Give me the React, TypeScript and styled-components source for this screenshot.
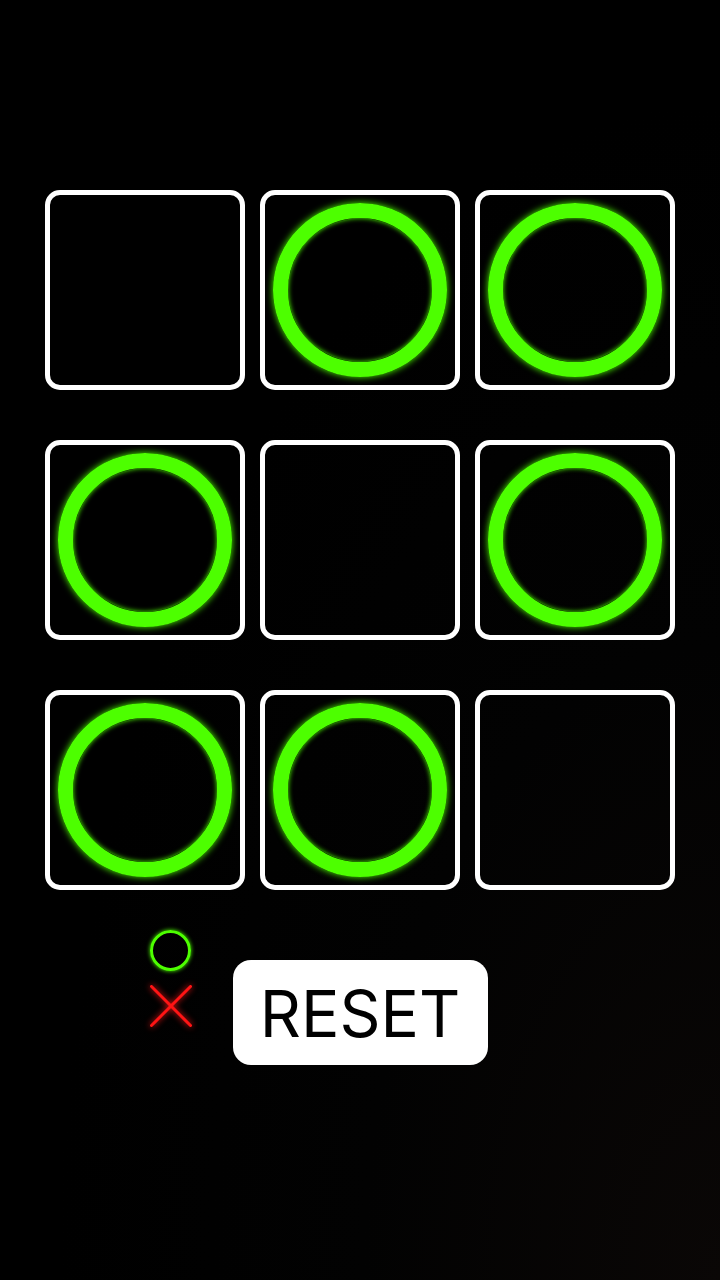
import React from 'react';
import styled, {createGlobalStyle} from 'styled-components';

const Green = "#4dff00";
const Red = "#ff1414";

const GlobalStyle = createGlobalStyle`
    html, body {
        margin: 0;
        padding: 0;
        background: #000;
    }
    * {
        box-sizing: border-box;
    }
`;

const Screen = styled.div`
    width: 720px;
    height: 1280px;
    overflow: hidden;
    background: radial-gradient(ellipse at 100% 100%, #0a0706 0%, #020202 35%, #000 65%);
    font-family: Inter, "Noto Sans", sans-serif;
    display: flex;
    flex-direction: column;
    align-items: center;
    padding-top: 190px;
`;

const Board = styled.div`
    display: grid;
    grid-template-columns: repeat(3, 200px);
    column-gap: 15px;
    row-gap: 50px;
`;

const Cell = styled.div`
    width: 200px;
    height: 200px;
    border: 5px solid #fff;
    border-radius: 15px;
    display: flex;
    align-items: center;
    justify-content: center;
`;

const Ring = styled.div`
    width: 174px;
    height: 174px;
    border-radius: 50%;
    border: 15px solid ${Green};
    box-shadow: 0 0 7px ${Green}, inset 0 0 5px ${Green};
`;

const Controls = styled.div`
    display: grid;
    grid-template-columns: 1fr auto 1fr;
    column-gap: 41px;
    width: 720px;
    margin-top: 40px;
`;

const Legend = styled.div`
    justify-self: end;
    display: flex;
    flex-direction: column;
    align-items: center;
    gap: 14px;
`;

const LegendRing = styled.div`
    width: 41px;
    height: 41px;
    border-radius: 50%;
    border: 3px solid ${Green};
    box-shadow: 0 0 4px ${Green};
`;

const Cross = styled.svg`
    width: 42px;
    height: 42px;
    filter: drop-shadow(0 0 3px ${Red});
`;

const ResetButton = styled.button`
    margin-top: 30px;
    width: 255px;
    height: 105px;
    border: none;
    border-radius: 18px;
    background: #fff;
    color: #000;
    font-family: Inter, "Noto Sans", sans-serif;
    font-size: 64px;
    font-weight: 400;
    padding: 0;
    padding-top: 2px;
    cursor: pointer;
`;

const board = ["", "O", "O", "O", "", "O", "O", "O", ""];

export default function App() {
    return (
        <>
            <GlobalStyle/>
            <Screen>
                <Board>
                    {board.map((v, i) => (
                        <Cell key={i}>{v === "O" && <Ring/>}</Cell>
                    ))}
                </Board>
                <Controls>
                    <Legend>
                        <LegendRing/>
                        <Cross viewBox="0 0 42 42">
                            <line x1="1.5" y1="1.5" x2="40.5" y2="40.5" stroke={Red} strokeWidth="3" strokeLinecap="round"/>
                            <line x1="40.5" y1="1.5" x2="1.5" y2="40.5" stroke={Red} strokeWidth="3" strokeLinecap="round"/>
                        </Cross>
                    </Legend>
                    <ResetButton>RESET</ResetButton>
                    <div/>
                </Controls>
            </Screen>
        </>
    );
}
